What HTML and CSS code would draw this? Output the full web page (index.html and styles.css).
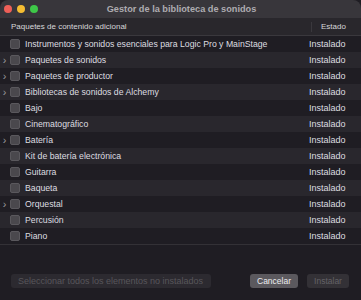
FILE: index.html
```html
<!DOCTYPE html>
<html lang="es">
<head>
<meta charset="utf-8">
<link rel="stylesheet" href="styles.css">
</head>
<body>
<div class="window">
  <div class="titlebar">
    <div class="lights">
      <span class="light red"></span>
      <span class="light yellow"></span>
      <span class="light green"></span>
    </div>
    <div class="title">Gestor de la biblioteca de sonidos</div>
  </div>
  <div class="thead">
    <div class="th-name">Paquetes de contenido adicional</div>
    <div class="th-state">Estado</div>
  </div>
  <div class="rows">
    <div class="row"><span class="chev"></span><span class="cb"></span><span class="name">Instrumentos y sonidos esenciales para Logic Pro y MainStage</span><span class="state">Instalado</span></div>
    <div class="row"><span class="chev">›</span><span class="cb"></span><span class="name">Paquetes de sonidos</span><span class="state">Instalado</span></div>
    <div class="row"><span class="chev">›</span><span class="cb"></span><span class="name">Paquetes de productor</span><span class="state">Instalado</span></div>
    <div class="row"><span class="chev">›</span><span class="cb"></span><span class="name">Bibliotecas de sonidos de Alchemy</span><span class="state">Instalado</span></div>
    <div class="row"><span class="chev"></span><span class="cb"></span><span class="name">Bajo</span><span class="state">Instalado</span></div>
    <div class="row"><span class="chev"></span><span class="cb"></span><span class="name">Cinematográfico</span><span class="state">Instalado</span></div>
    <div class="row"><span class="chev">›</span><span class="cb"></span><span class="name">Batería</span><span class="state">Instalado</span></div>
    <div class="row"><span class="chev"></span><span class="cb"></span><span class="name">Kit de batería electrónica</span><span class="state">Instalado</span></div>
    <div class="row"><span class="chev"></span><span class="cb"></span><span class="name">Guitarra</span><span class="state">Instalado</span></div>
    <div class="row"><span class="chev"></span><span class="cb"></span><span class="name">Baqueta</span><span class="state">Instalado</span></div>
    <div class="row"><span class="chev">›</span><span class="cb"></span><span class="name">Orquestal</span><span class="state">Instalado</span></div>
    <div class="row"><span class="chev"></span><span class="cb"></span><span class="name">Percusión</span><span class="state">Instalado</span></div>
    <div class="row"><span class="chev"></span><span class="cb"></span><span class="name">Piano</span><span class="state">Instalado</span></div>
  </div>
  <div class="footer">
    <button class="btn btn-select">Seleccionar todos los elementos no instalados</button>
    <div class="spacer"></div>
    <button class="btn btn-cancel">Cancelar</button>
    <button class="btn btn-install">Instalar</button>
  </div>
</div>
</body>
</html>
```

FILE: styles.css
```css
html, body {
  margin: 0;
  padding: 0;
  background: #1f1d23;
}
body {
  font-family: "Liberation Sans", Arial, sans-serif;
  color: #dedde0;
  width: 361px;
  height: 300px;
  overflow: hidden;
}
.window {
  width: 361px;
  height: 300px;
  background: #1f1d23;
  display: flex;
  flex-direction: column;
  border-radius: 8px 8px 0 0;
  overflow: hidden;
}
.titlebar {
  height: 18px;
  background: #38363b;
  display: flex;
  align-items: center;
}
.lights {
  display: flex;
  gap: 5px;
  padding-left: 4px;
}
.light {
  width: 8px;
  height: 8px;
  border-radius: 50%;
  display: block;
}
.red { background: #ee5f58; }
.yellow { background: #f5bd32; }
.green { background: #3ec748; }
.title {
  flex: 1;
  text-align: center;
  font-size: 9.2px;
  font-weight: bold;
  color: #aeacb1;
  margin-right: 36px;
}
.thead {
  height: 18px;
  background: #29272c;
  border-bottom: 1px solid #3a383d;
  box-sizing: border-box;
  display: flex;
  align-items: center;
  font-size: 8px;
  color: #d8d7da;
}
.th-name {
  flex: 1;
  padding-left: 11px;
}
.th-state {
  width: 50px;
  box-sizing: border-box;
  padding-left: 9px;
  border-left: 1px solid #3a383d;
  height: 10px;
  line-height: 10px;
}
.rows {
  display: flex;
  flex-direction: column;
  border-bottom: 1px solid #333136;
}
.row {
  height: 16px;
  display: flex;
  align-items: center;
  font-size: 8.7px;
}
.row:nth-child(even) {
  background: #29272d;
}
.chev {
  width: 9px;
  text-align: center;
  font-size: 11px;
  color: #9a989d;
  line-height: 16px;
}
.cb {
  width: 8px;
  height: 8px;
  border-radius: 2px;
  background: #4a484d;
  border: 0.5px solid #5a585d;
  margin-left: 1px;
  margin-right: 5px;
  display: block;
}
.name {
  flex: 1;
  white-space: nowrap;
}
.state {
  width: 52px;
  font-size: 9px;
  white-space: nowrap;
}
.footer {
  flex: 1;
  display: flex;
  align-items: flex-end;
  padding: 0 12px 12px 11px;
  gap: 9px;
}
.spacer { flex: 1; }
.btn {
  height: 14px;
  border: none;
  border-radius: 3px;
  font-family: "Liberation Sans", Arial, sans-serif;
  font-size: 8.5px;
  padding: 0 7px;
  line-height: 14px;
}
.btn-select {
  width: 200px;
  background: #2c2a30;
  color: #58565b;
  text-align: left;
  padding-left: 7px;
  padding-right: 2px;
  font-size: 9px;
  white-space: nowrap;
}
.btn-cancel {
  width: 48px;
  background: #5b595e;
  color: #eeedef;
}
.btn-install {
  width: 42px;
  background: #333136;
  color: #646267;
}
```
